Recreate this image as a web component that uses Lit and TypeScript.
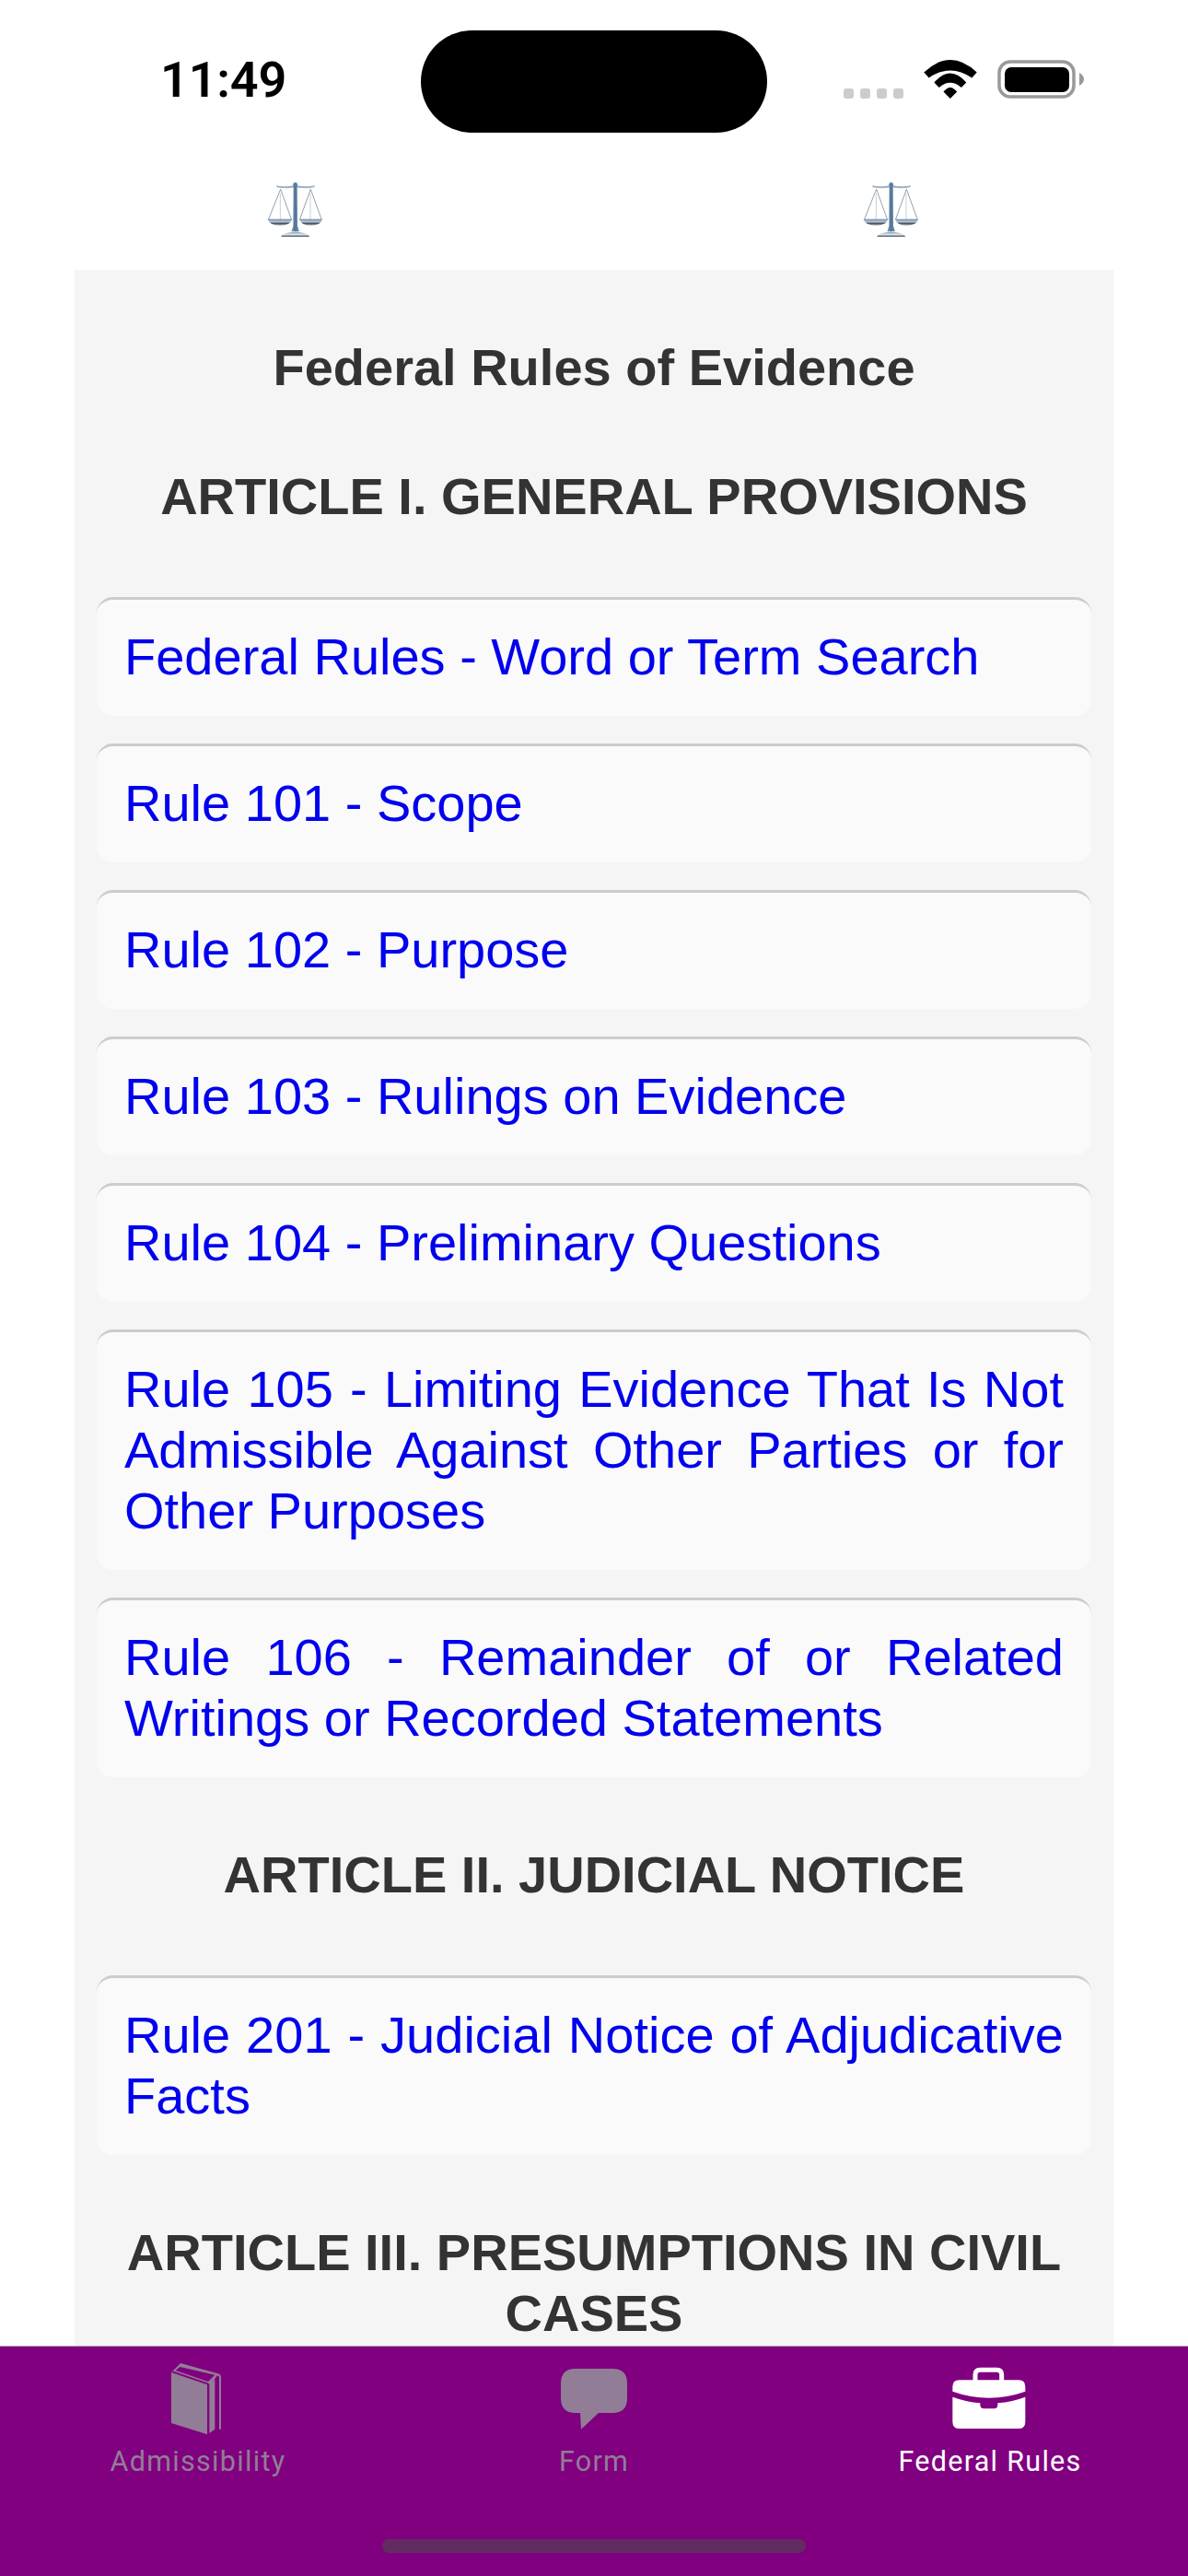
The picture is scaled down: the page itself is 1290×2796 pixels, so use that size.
import { LitElement, html, css, svg } from "lit";
import { customElement } from "lit/decorators.js";

type Item = { kind: "h" | "t" | "c"; text: string };

const CONTENT: Item[] = [
  { kind: "t", text: "Federal Rules of Evidence" },
  { kind: "h", text: "ARTICLE I. GENERAL PROVISIONS" },
  { kind: "c", text: "Federal Rules - Word or Term Search" },
  { kind: "c", text: "Rule 101 - Scope" },
  { kind: "c", text: "Rule 102 - Purpose" },
  { kind: "c", text: "Rule 103 - Rulings on Evidence" },
  { kind: "c", text: "Rule 104 - Preliminary Questions" },
  { kind: "c", text: "Rule 105 - Limiting Evidence That Is Not Admissible Against Other Parties or for Other Purposes" },
  { kind: "c", text: "Rule 106 - Remainder of or Related Writings or Recorded Statements" },
  { kind: "h", text: "ARTICLE II. JUDICIAL NOTICE" },
  { kind: "c", text: "Rule 201 - Judicial Notice of Adjudicative Facts" },
  { kind: "h", text: "ARTICLE III. PRESUMPTIONS IN CIVIL CASES" },
];

const scales = (id: string) => svg`
  <svg class="scale" viewBox="0 0 240 240" aria-hidden="true">
    <defs>
      <linearGradient id="${id}-pole" x1="0" x2="1" y1="0" y2="0">
        <stop offset="0" stop-color="#8aa0b8" /><stop offset="0.5" stop-color="#4f7397" /><stop offset="1" stop-color="#7f97ae" />
      </linearGradient>
      <linearGradient id="${id}-pan" x1="0" x2="0" y1="0" y2="1">
        <stop offset="0" stop-color="#6f90b2" /><stop offset="0.45" stop-color="#b5c4d2" /><stop offset="0.7" stop-color="#4a4f55" /><stop offset="1" stop-color="#aab4be" />
      </linearGradient>
      <linearGradient id="${id}-base" x1="0" x2="0" y1="0" y2="1">
        <stop offset="0" stop-color="#7d98b2" /><stop offset="0.55" stop-color="#dfe8ef" /><stop offset="1" stop-color="#3d4650" />
      </linearGradient>
    </defs>
    <path d="M104 46 L64 146 M104 46 L140 146 M202 46 L166 146 M202 46 L238 146" fill="none" stroke="#7d8894" stroke-width="2.4" />
    <path d="M103 60 L103 144 M201 60 L201 144" fill="none" stroke="#c6d0da" stroke-width="3" />
    <path d="M90 34 Q122 40 152 32 Q184 40 216 34 L214 40 Q184 46 152 40 Q122 46 92 40 Z" fill="#9fb0c0" />
    <path d="M146 34 L158 34 L159 166 L165 184 L139 184 L145 166 Z" fill="url(#${id}-pole)" />
    <circle cx="152" cy="31" r="7" fill="#5d7c9b" />
    <path d="M62 143 L142 143 Q136 164 102 164 Q68 164 62 143 Z" fill="url(#${id}-pan)" />
    <path d="M165 143 L240 143 Q235 164 202 164 Q171 164 165 143 Z" fill="url(#${id}-pan)" />
    <path d="M106 201 Q108 187 152 185 Q196 187 198 201 Z" fill="url(#${id}-base)" />
  </svg>`;

const bookIcon = svg`
  <svg class="tab-icon" viewBox="-15 0 300 300" aria-hidden="true">
    <path fill="currentColor" d="M48 60 L165 100 L165 262 L48 225 Z" />
    <path fill="currentColor" fill-rule="evenodd" d="M48 60 L78 30 L205 65 L210 72 L210 245 L204 245 L204 74 L198 70 L178 97 L190 82 L190 245 L172 258 L172 98 L165 94 L55 56 Z M76 42 L62 54 L168 90 L190 68 Z" />
  </svg>`;

const bubbleIcon = svg`
  <svg class="tab-icon" viewBox="0 0 300 300" aria-hidden="true">
    <path fill="currentColor" d="M90 48 H210 Q258 48 258 96 V144 Q258 192 210 192 H165 L108 245 L105 192 H90 Q42 192 42 144 V96 Q42 48 90 48 Z" />
  </svg>`;

const briefcaseIcon = svg`
  <svg class="tab-icon" viewBox="0 0 300 300" aria-hidden="true">
    <path fill="none" stroke="currentColor" stroke-width="15" d="M102 88 V68 Q102 52 118 52 H172 Q188 52 188 68 V88" />
    <path fill="currentColor" d="M50 85 H243 Q265 85 265 107 V122 Q147 164 28 122 V107 Q28 85 50 85 Z" />
    <path fill="currentColor" d="M28 140 Q70 155 118 160 V166 Q118 178 130 178 H163 Q175 178 175 166 V160 Q225 155 265 140 V221 Q265 243 243 243 H50 Q28 243 28 221 Z" />
  </svg>`;

@customElement("app-root")
export class AppRoot extends LitElement {
  static styles = css`
    :host {
      display: flex;
      flex-direction: column;
      width: 1290px;
      height: 2796px;
      background: #fff;
      overflow: hidden;
      font-family: "Liberation Sans", Arial, sans-serif;
    }
    .status {
      flex: none;
      height: 190px;
      display: flex;
      align-items: flex-start;
      box-sizing: border-box;
      padding: 33px 0 0 174px;
    }
    .time {
      width: 283px;
      margin-top: 25px;
      font-family: Roboto, "Liberation Sans", sans-serif;
      font-size: 54px;
      line-height: 58px;
      font-weight: 600;
      letter-spacing: -0.2px;
      color: #000;
    }
    .island {
      width: 376px;
      height: 111px;
      border-radius: 56px;
      background: #000;
      flex: none;
    }
    .sys {
      margin: 32px 0 0 83px;
      display: flex;
      align-items: flex-end;
      height: 42px;
    }
    .dots {
      display: flex;
      gap: 7px;
    }
    .dots i {
      width: 11px;
      height: 11px;
      border-radius: 3px;
      background: #cccccc;
    }
    .wifi {
      width: 58px;
      height: 42px;
      margin-left: 22px;
    }
    .battery {
      width: 95px;
      height: 42px;
      margin-left: 22px;
    }
    .scales {
      flex: none;
      height: 103px;
      display: flex;
      gap: 567px;
      padding-left: 270px;
    }
    .scale {
      width: 80px;
      height: 80px;
      flex: none;
    }
    .viewport {
      flex: 1;
      min-height: 0;
      overflow: hidden;
    }
    .panel {
      width: 1128px;
      margin-left: 81px;
      box-sizing: border-box;
      padding: 73px 24px 40px;
      background: #f5f5f5;
      display: flow-root;
    }
    .title,
    .heading {
      text-align: center;
      font-weight: 700;
      color: #333333;
      font-size: 56px;
      line-height: 66px;
    }
    .title {
      margin: 0 0 74px;
    }
    .heading {
      margin: 73px 0 76px;
    }
    .card {
      margin: 0 0 30px;
      padding: 29px 30px 31px;
      background: #fafafa;
      border-top: 3px solid #cccccc;
      border-radius: 18px;
      font-size: 56px;
      line-height: 66px;
      color: #0000ee;
      text-align: justify;
    }
    .tabs {
      flex: none;
      height: 250px;
      box-sizing: border-box;
      border-top: 1px solid #a9a9a9;
      background: #800080;
      display: grid;
      grid-template-columns: repeat(3, 430px);
      position: relative;
    }
    .tab {
      display: flex;
      flex-direction: column;
      align-items: center;
      padding-top: 8px;
      color: #927d96;
      font-family: Roboto, "Liberation Sans", sans-serif;
      font-size: 30.5px;
      line-height: 36px;
      letter-spacing: 1.3px;
    }
    .tab.active {
      color: #ffffff;
    }
    .tab span {
      margin-top: -1px;
    }
    .tab-icon {
      width: 100px;
      height: 100px;
      flex: none;
    }
    .home {
      position: absolute;
      left: 415px;
      top: 209px;
      width: 460px;
      height: 15px;
      border-radius: 8px;
      background: #612c61;
    }
  `;

  render() {
    return html`
      <div class="status">
        <div class="time">11:49</div>
        <div class="island"></div>
        <div class="sys">
          <div class="dots"><i></i><i></i><i></i><i></i></div>
          <svg class="wifi" viewBox="297 45 171 125" aria-hidden="true">
            <path d="M297 85 Q382 5 468 85 L452 103 Q382 55 313 103 Z M330 118 Q382 58 434 118 L418 134 Q382 103 346 134 Z M360 148 Q382 120 404 148 L382 170 Z" fill="#000" />
          </svg>
          <svg class="battery" viewBox="0 0 95 42" aria-hidden="true">
            <rect x="2" y="2" width="81" height="38" rx="12" fill="none" stroke="#999999" stroke-width="3.5" />
            <rect x="8" y="8" width="70" height="27" rx="7" fill="#000" />
            <path d="M89 14 Q94 17 94 21 Q94 25 89 28 Z" fill="#999999" />
          </svg>
        </div>
      </div>
      <div class="scales">${scales("a")}${scales("b")}</div>
      <div class="viewport">
        <div class="panel">
          ${CONTENT.map((item) =>
            item.kind === "c"
              ? html`<div class="card">${item.text}</div>`
              : html`<div class=${item.kind === "t" ? "title" : "heading"}>${item.text}</div>`
          )}
        </div>
      </div>
      <nav class="tabs">
        <div class="tab">${bookIcon}<span>Admissibility</span></div>
        <div class="tab">${bubbleIcon}<span>Form</span></div>
        <div class="tab active">${briefcaseIcon}<span>Federal Rules</span></div>
        <div class="home"></div>
      </nav>
    `;
  }
}
